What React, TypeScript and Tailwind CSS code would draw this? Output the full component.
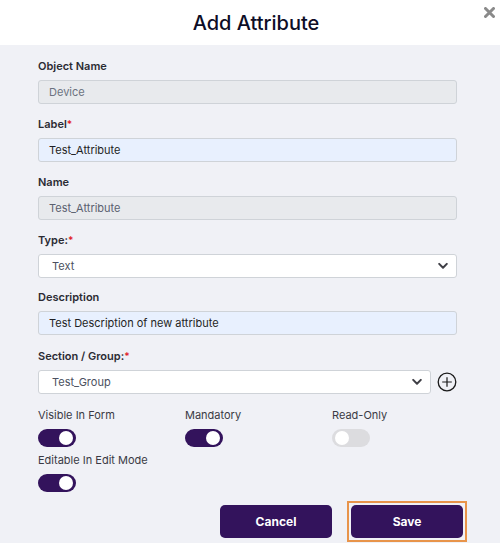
import React from 'react';

const font = { fontFamily: 'Inter, "Noto Sans", sans-serif' };

function Label({ text, required }: { text: string; required?: boolean }) {
  return (
    <div className="mb-[7px] h-[14px] text-[11px] font-semibold leading-[14px] text-[#2b2b33]">
      {text}
      {required && <span className="align-top text-[10px] text-[#e11d2a]">*</span>}
    </div>
  );
}

function Chevron() {
  return (
    <svg className="pointer-events-none absolute right-[8px] top-1/2 -translate-y-1/2" width="10" height="7" viewBox="0 0 10 7">
      <path d="M1.2 1.4 5 5.2 8.8 1.4" fill="none" stroke="#3f3f46" strokeWidth="2" strokeLinecap="round" strokeLinejoin="round" />
    </svg>
  );
}

function Toggle({ on }: { on: boolean }) {
  return (
    <div className={`flex h-[18px] w-[38px] items-center rounded-full px-[3px] ${on ? 'justify-end bg-[#33135c]' : 'justify-start bg-[#dcdcdf]'}`}>
      <div className="h-[14px] w-[14px] rounded-full bg-white" />
    </div>
  );
}

export default function App() {
  return (
    <div style={font} className="h-[549px] w-[500px] bg-white">
      <div className="relative flex h-[45px] items-center justify-center pl-[12px]">
        <h1 className="text-[20px] font-medium text-[#0d0d26]">Add Attribute</h1>
        <svg className="absolute right-[5px] top-[7px]" width="11" height="11" viewBox="0 0 11 11">
          <path d="M1.5 1.5 9.5 9.5M9.5 1.5 1.5 9.5" stroke="#8a8a8a" strokeWidth="3" strokeLinecap="round" />
        </svg>
      </div>
      <div className="h-[498px] bg-[#f0f1f6] pl-[38px] pr-[43px] pt-[14px]">
        <Label text="Object Name" />
        <div className="h-[24px] rounded-[3px] border border-[#cfd3d8] bg-[#e8eaed] pl-[10px] text-[11px] leading-[22px] text-[#6b7280]">Device</div>

        <div className="mt-[13px]" />
        <Label text="Label" required />
        <div className="h-[24px] rounded-[3px] border border-[#cfd3d8] bg-[#e8f0fe] pl-[10px] text-[11px] leading-[22px] text-[#1f1f24]">Test_Attribute</div>

        <div className="mt-[13px]" />
        <Label text="Name" />
        <div className="h-[24px] rounded-[3px] border border-[#cfd3d8] bg-[#e8eaed] pl-[10px] text-[11px] leading-[22px] text-[#5b6170]">Test_Attribute</div>

        <div className="mt-[13px]" />
        <Label text="Type:" required />
        <div className="relative h-[24px] rounded-[3px] border border-[#cfd3d8] bg-white pl-[13px] text-[11px] leading-[22px] text-[#4b5060]">
          Text
          <Chevron />
        </div>

        <div className="mt-[12px]" />
        <Label text="Description" />
        <div className="h-[24px] rounded-[3px] border border-[#cfd3d8] bg-[#e8f0fe] pl-[10px] text-[11px] leading-[22px] text-[#1f1f24]">Test Description of new attribute</div>

        <div className="mt-[14px]" />
        <Label text="Section / Group:" required />
        <div className="mt-[1px] flex items-center gap-[6px]">
          <div className="relative h-[24px] w-[394px] rounded-[3px] border border-[#cfd3d8] bg-white pl-[13px] text-[11px] leading-[22px] text-[#4b5060]">
            Test_Group
            <Chevron />
          </div>
          <svg width="20" height="20" viewBox="0 0 20 20" className="shrink-0">
            <circle cx="10" cy="10" r="8.8" fill="none" stroke="#1a1a1a" strokeWidth="1.3" />
            <path d="M10 5.2v9.6M5.2 10h9.6" stroke="#1a1a1a" strokeWidth="1.2" />
          </svg>
        </div>

        <div className="mt-[14px] grid grid-cols-[147px_147px_1fr]">
          {[
            ['Visible In Form', true],
            ['Mandatory', true],
            ['Read-Only', false],
          ].map(([t, on]) => (
            <div key={t as string}>
              <div className="mb-[7px] h-[14px] text-[11px] leading-[14px] text-[#3a3a44]">{t as string}</div>
              <Toggle on={on as boolean} />
            </div>
          ))}
        </div>
        <div className="mt-[6px]">
          <div className="mb-[7px] h-[14px] text-[11px] leading-[14px] text-[#3a3a44]">Editable In Edit Mode</div>
          <Toggle on />
        </div>

        <div className="mr-[-6px] mt-[13px] flex justify-end gap-[19px]">
          <button className="h-[33px] w-[112px] rounded-[5px] bg-[#33135c] text-[12px] font-bold text-white">Cancel</button>
          <div className="relative">
            <span className="absolute -inset-[4px] border-2 border-[#e8944a]" />
            <button className="relative h-[33px] w-[112px] rounded-[5px] bg-[#33135c] text-[12px] font-bold text-white">Save</button>
          </div>
        </div>
      </div>
    </div>
  );
}
